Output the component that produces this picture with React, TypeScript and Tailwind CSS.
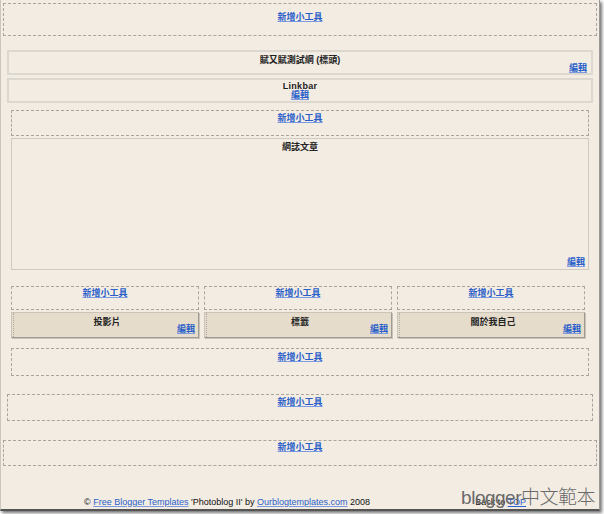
import React from "react";

const LINK = "text-[#2a5fc9] font-bold underline decoration-[#7d9be0]";

function AddGadget({ cls, pt }: { cls: string; pt: string }) {
  return (
    <div className={`border border-dashed border-[#a9a49c] text-center text-[9px] leading-[12px] ${cls} ${pt}`}>
      <a className={LINK}>新增小工具</a>
    </div>
  );
}

function ColGadget({ title }: { title: string }) {
  return (
    <div className="h-[26px] mt-[2px] flex bg-[#e5dccb] border border-[#c9c3b8] border-r-[#9e9a94] border-b-[#9e9a94] shadow-[1px_1px_0_#c8c2b8] text-[9px] leading-[12px]">
      <div className="w-[3px] ml-[1px] border-l border-dotted border-[#b0aaa0]" />
      <div className="flex-1 flex flex-col">
        <div className="text-center font-bold text-[#222] pt-[3px]">{title}</div>
        <div className="text-right pr-[3px] -mt-[5px]">
          <a className={LINK}>編輯</a>
        </div>
      </div>
    </div>
  );
}

export default function App() {
  return (
    <div
      className="w-[604px] h-[514px] bg-white overflow-hidden"
      style={{ fontFamily: "'Liberation Sans', 'Noto Sans CJK TC', sans-serif" }}
    >
      <div className="relative w-[600px] h-[511px] bg-[#f3ece3] border-l border-l-[#c9c6c0] border-r border-r-[#9a9894] border-b-2 border-b-[#555] shadow-[2px_2px_3px_rgba(0,0,0,0.55)] flex flex-col">
        <AddGadget cls="mx-[2px] mt-[3px] h-[33px]" pt="pt-[7px]" />

        <div className="mx-[6px] mt-[14px] h-[25px] border-2 border-[#ddd8cf] flex flex-col text-[9px] leading-[10px]">
          <div className="text-center font-bold text-[#222] pt-[3px]">賦又賦測試網 (標頭)</div>
          <div className="text-right pr-[4px] -mt-[2px]">
            <a className={LINK}>編輯</a>
          </div>
        </div>

        <div className="mx-[6px] mt-[3px] h-[25px] border-2 border-[#ddd8cf] flex flex-col items-center pt-[2px] text-[9px] leading-[9px]">
          <div className="font-bold text-[#222] tracking-[0.3px]">Linkbar</div>
          <a className={LINK}>編輯</a>
        </div>

        <AddGadget cls="mx-[10px] mt-[7px] h-[26px]" pt="pt-[1px]" />

        <div className="mx-[10px] mt-[2px] h-[132px] border border-[#d0cbc2] flex flex-col text-[9px] leading-[12px]">
          <div className="text-center font-bold text-[#222] pt-[2px]">網誌文章</div>
          <div className="flex-1" />
          <div className="text-right pr-[3px] pb-[1px]">
            <a className={LINK}>編輯</a>
          </div>
        </div>

        <div className="ml-[10px] w-[574px] mt-[16px] grid grid-cols-3 gap-x-[5px]">
          {["投影片", "標籤", "關於我自己"].map((t) => (
            <div key={t} className="flex flex-col">
              <AddGadget cls="h-[24px]" pt="pt-[0px]" />
              <ColGadget title={t} />
            </div>
          ))}
        </div>

        <AddGadget cls="mx-[10px] mt-[10px] h-[28px]" pt="pt-[2px]" />
        <AddGadget cls="mx-[6px] mt-[18px] h-[27px]" pt="pt-[1px]" />
        <AddGadget cls="mx-[2px] mt-[19px] h-[26px]" pt="pt-[0px]" />

        <div className="mt-[30px] flex items-center text-[9px] leading-[12px] text-[#111]">
          <div className="pl-[83px]">
            © <a className="text-[#2a5fc9] underline decoration-[#7d9be0]">Free Blogger Templates</a> 'Photoblog II' by{" "}
            <a className="text-[#2a5fc9] underline decoration-[#7d9be0]">Ourblogtemplates.com</a> 2008
          </div>
          <div className="flex-1" />
          <div className="pr-[73px]">
            Back to <a className="text-[#2a5fc9] underline">TOP</a>
          </div>
        </div>

        <div className="absolute right-[4px] bottom-[0px] text-[19px] leading-[22px] font-light text-[#6a6a6a] tracking-[-0.5px]">
          blogger中文範本
        </div>
      </div>
    </div>
  );
}
